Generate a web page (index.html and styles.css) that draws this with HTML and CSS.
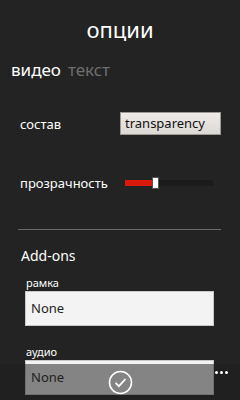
FILE: index.html
```html
<!DOCTYPE html>
<html>
<head>
    <title>опции</title>
    <link rel="stylesheet" href="styles.css">
</head>
<body>
    <div class="page">
        <h1 class="title">опции</h1>
        <div class="tabs">
            <span class="tab active">видео</span>
            <span class="tab">текст</span>
        </div>

        <div class="row">
            <span class="label">состав</span>
            <div class="combo">transparency</div>
        </div>
        <div class="row slider-row">
            <span class="label">прозрачность</span>
            <div class="slider">
                <div class="fill"></div>
                <div class="thumb"></div>
            </div>
        </div>

        <div class="divider"></div>

        <div class="section">Add-ons</div>
        <div class="field">
            <span class="field-label">рамка</span>
            <div class="picker">None</div>
        </div>
        <div class="field">
            <span class="field-label">аудио</span>
            <div class="picker">None</div>
        </div>
    </div>

    <div class="appbar">
        <svg class="check" width="25" height="25" viewBox="0 0 25 25">
            <circle cx="12.5" cy="12.5" r="11" fill="none" stroke="#fff" stroke-width="1.6"/>
            <path d="M7.5 12.8 L10.9 16.2 L17.5 9" fill="none" stroke="#fff" stroke-width="1.8"/>
        </svg>
        <div class="dots">
            <span></span><span></span><span></span>
        </div>
    </div>
</body>
</html>
```

FILE: styles.css
```css
body {
    margin: 0;
    padding: 0;
    background: #232323;
    color: #fff;
    font-family: 'Noto Sans', 'Open Sans', sans-serif;
    width: 240px;
    height: 400px;
    overflow: hidden;
    position: relative;
}

.page {
    display: flex;
    flex-direction: column;
}

.title {
    margin: 14px 0 0;
    font-size: 22px;
    font-weight: normal;
    text-align: center;
    line-height: 30px;
}

.tabs {
    display: flex;
    gap: 7px;
    padding: 13px 0 0 11px;
    font-size: 17px;
    line-height: 26px;
}

.tab {
    color: #6e6e6e;
}

.tab.active {
    color: #fff;
}

.row {
    display: flex;
    align-items: center;
    padding: 0 19px 0 20px;
    margin-top: 29px;
    font-size: 13px;
    line-height: 18px;
}

.label {
    width: 100px;
}

.combo {
    width: 101px;
    height: 23px;
    box-sizing: border-box;
    background: linear-gradient(to bottom, #eeebe8, #dcd8d4);
    border: 1px solid #9c9894;
    color: #111;
    font-size: 13px;
    line-height: 21px;
    padding-left: 4px;
}

.slider-row {
    margin-top: 39px;
}

.slider {
    margin-left: 5px;
    width: 88px;
    height: 6px;
    background: #1b1b1b;
    display: flex;
    align-items: center;
}

.fill {
    width: 27px;
    height: 6px;
    background: #d81a0c;
}

.thumb {
    width: 7px;
    height: 12px;
    background: #fff;
    border: 1px solid #555;
    box-sizing: border-box;
}

.divider {
    margin: 37px 19px 0 18px;
    border-top: 1px solid #6b6b6b;
}

.section {
    margin: 16px 0 0 21px;
    font-size: 14px;
    line-height: 20px;
}

.field {
    display: flex;
    flex-direction: column;
    margin: 9px 0 0 25px;
    width: 189px;
}

.field + .field {
    margin-top: 18px;
}

.field-label {
    margin-left: 1px;
    font-size: 11px;
    line-height: 16px;
}

.picker {
    height: 35px;
    box-sizing: border-box;
    background: #f3f3f3;
    border: 1px solid #c8c8c8;
    color: #222;
    font-size: 13px;
    line-height: 33px;
    padding-left: 5px;
}

.appbar {
    position: absolute;
    left: 0;
    right: 0;
    bottom: 0;
    height: 36px;
    background: rgba(31, 31, 31, 0.52);
    display: flex;
    justify-content: center;
    align-items: center;
}

.dots {
    position: absolute;
    right: 12px;
    top: 7px;
    display: flex;
    gap: 2px;
}

.dots span {
    width: 3px;
    height: 3px;
    border-radius: 50%;
    background: #fff;
}
```
